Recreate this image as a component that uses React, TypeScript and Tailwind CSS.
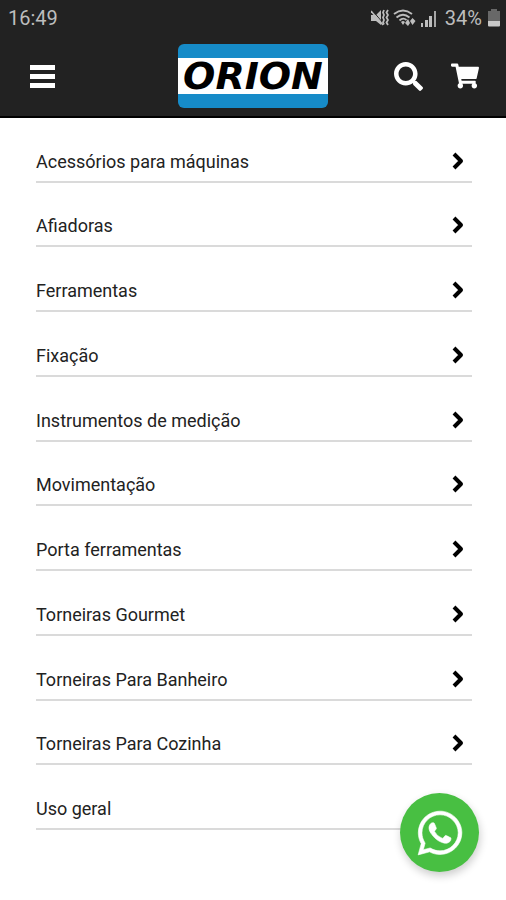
import { FaSearch, FaShoppingCart, FaWhatsapp } from "react-icons/fa";

const categories = [
  "Acessórios para máquinas",
  "Afiadoras",
  "Ferramentas",
  "Fixação",
  "Instrumentos de medição",
  "Movimentação",
  "Porta ferramentas",
  "Torneiras Gourmet",
  "Torneiras Para Banheiro",
  "Torneiras Para Cozinha",
  "Uso geral",
];

function MutedIcon() {
  return (
    <svg width="18" height="18" viewBox="0 0 18 18" fill="currentColor" stroke="currentColor" aria-hidden="true">
      <path d="M0 6h5l5-5v15l-5-4H0z" stroke="none" />
      <path d="M1 1l11 13" stroke="#222222" strokeWidth="1" />
      <path d="M0 2l12 14" strokeWidth="1.5" />
      <path d="M13 1l-1 2.500 1 2.500-1 2.500 1 2.500-1 2.500 1 2M17 1l-1.500 2.500L17 6l-1.500 2.500L17 11l-1.500 2.500L17 16" fill="none" strokeWidth="1.8" />
    </svg>
  );
}

function WifiIcon() {
  return (
    <svg width="24" height="18" viewBox="0 0 24 18" fill="none" stroke="currentColor" aria-hidden="true">
      <path d="M1 5Q10-2 19 5M3.500 8.500Q10 3 16.500 8.500M6.500 11.500Q10 8 13.500 11" strokeWidth="1.8" />
      <path d="M8 13q2-2 4 0l-2 3zM12 14l3-4 2 4-2 3zM17 12l2.500-3 3 3-3 4z" fill="currentColor" stroke="none" />
    </svg>
  );
}

function SignalIcon() {
  return (
    <svg width="16" height="17" viewBox="0 0 16 17" fill="currentColor" aria-hidden="true">
      <path d="M0 13h2v4H0zM4 10h3v7H4zM8 6h3v11H8z" />
      <path d="M13 1h2v16h-2z" opacity=".85" />
    </svg>
  );
}

function BatteryIcon() {
  return (
    <svg width="12" height="18" viewBox="0 0 12 18" aria-hidden="true">
      <path d="M3 0h6v2h3v10H0V2h3z" fill="#686868" />
      <path d="M0 12h12v4.500a1 1 0 0 1-1 1H1a1 1 0 0 1-1-1z" fill="#c9c9c9" />
    </svg>
  );
}

function ChevronIcon() {
  return (
    <svg width="12" height="18" viewBox="0 0 12 18" fill="none" stroke="#000000" strokeWidth="4" className="mb-1" aria-hidden="true">
      <path d="M2 2l7 7-7 7" strokeLinejoin="round" />
    </svg>
  );
}

function StatusBar() {
  return (
    <div className="flex h-9 items-center justify-between pr-1.5 pl-2 text-xl text-[#bdbdbd]">
      <span>16:49</span>
      <div className="flex items-center gap-1">
        <MutedIcon />
        <WifiIcon />
        <SignalIcon />
        <span className="px-1 pr-0.5 pl-1">34%</span>
        <BatteryIcon />
      </div>
    </div>
  );
}

function Logo() {
  return (
    <a
      href="#"
      className="flex h-16 w-[150px] items-center justify-center rounded-md border-t-14 border-b-14 border-[#168bc8] bg-white font-['DejaVu_Sans',sans-serif] text-[38px] leading-9 font-bold text-black italic"
    >
      ORION
    </a>
  );
}

export default function App() {
  return (
    <div className="flex min-h-screen flex-col bg-white font-['Roboto',sans-serif]">
      <header className="h-[118px] border-b-2 border-black bg-[#222222]">
        <StatusBar />
        <div className="grid grid-cols-[1fr_auto_1fr] items-center px-[27px] pt-2 text-white">
          <button type="button" aria-label="Menu" className="justify-self-start px-[3px] py-2">
            <svg width="25" height="23" viewBox="0 0 25 23" fill="currentColor" aria-hidden="true">
              <path d="M0 0h25v5H0zM0 9h25v5H0zM0 18h25v5H0z" />
            </svg>
          </button>
          <Logo />
          <div className="flex items-center gap-7 justify-self-end">
            <button type="button" aria-label="Buscar">
              <FaSearch size={29} />
            </button>
            <button type="button" aria-label="Carrinho">
              <FaShoppingCart size={28} />
            </button>
          </div>
        </div>
      </header>

      <main className="flex flex-1 flex-col pr-[34px] pb-[70px] pl-9">
        <ul className="flex flex-1 flex-col">
          {categories.map((name) => (
            <li key={name} className="flex flex-1 border-b-2 border-[#dadada]">
              <a href="#" className="flex flex-1 items-end justify-between pr-2 pb-[7px] text-lg leading-6 text-[#222222]">
                <span>{name}</span>
                <ChevronIcon />
              </a>
            </li>
          ))}
        </ul>
      </main>

      <a
        href="#"
        aria-label="WhatsApp"
        className="fixed right-[27px] bottom-7 flex size-[79px] items-center justify-center rounded-full bg-[#48bf42] text-white shadow-[1px_4px_8px_rgba(0,0,0,0.2)]"
      >
        <FaWhatsapp size={50} className="stroke-white stroke-[6]" />
      </a>
    </div>
  );
}
